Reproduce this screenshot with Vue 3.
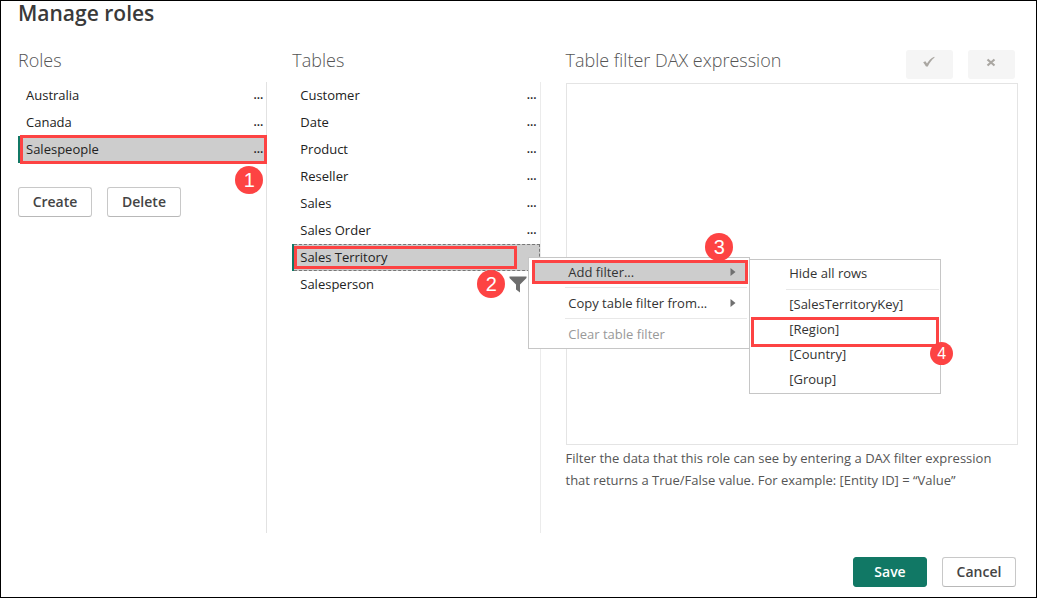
<script setup>
import { ref } from 'vue'

const roles = ['Australia', 'Canada', 'Salespeople']
const tables = [
  'Customer',
  'Date',
  'Product',
  'Reseller',
  'Sales',
  'Sales Order',
  'Sales Territory',
  'Salesperson',
]
const fields = ['[SalesTerritoryKey]', '[Region]', '[Country]', '[Group]']

const selectedRole = ref('Salespeople')
const selectedTable = ref('Sales Territory')
const expression = ref('')
</script>

<template>
  <main class="dialog">
    <h1 class="title">Manage roles</h1>

    <div class="columns">
      <section class="column">
        <h2 class="heading">Roles</h2>
        <div class="pane">
          <ul class="list">
            <li
              v-for="role in roles"
              :key="role"
              class="row"
              :class="{ selected: role === selectedRole }"
            >
              <button type="button" class="name" @click="selectedRole = role">{{ role }}</button>
              <button type="button" class="more">...</button>
              <template v-if="role === 'Salespeople'">
                <span class="mark mark-role"></span>
                <span class="badge badge-one">1</span>
              </template>
            </li>
          </ul>
          <div class="actions">
            <button type="button" class="btn">Create</button>
            <button type="button" class="btn">Delete</button>
          </div>
        </div>
      </section>

      <section class="column">
        <h2 class="heading">Tables</h2>
        <div class="pane pane-light">
          <ul class="list">
            <li
              v-for="table in tables"
              :key="table"
              class="row"
              :class="{ selected: table === selectedTable, focused: table === selectedTable }"
            >
              <button type="button" class="name" @click="selectedTable = table">{{ table }}</button>
              <svg
                v-if="table === 'Salesperson'"
                class="funnel"
                width="18"
                height="17"
                viewBox="0 0 18 17"
              >
                <path d="M0.5 0.5H17.5V2L11 8.5V16.5L7 13.5V8.5L0.5 2Z" fill="#6e6e6e" />
              </svg>
              <button v-else-if="table !== 'Sales Territory'" type="button" class="more">...</button>

              <template v-if="table === 'Sales Territory'">
                <span class="mark mark-table"></span>
                <span class="badge badge-two">2</span>
                <div class="menu context" role="menu">
                  <button type="button" class="item active" role="menuitem">
                    Add filter...
                    <svg class="arrow" width="6" height="8" viewBox="0 0 6 8">
                      <path d="M0.5 0L5.5 4L0.5 8Z" fill="#707070" />
                    </svg>
                    <span class="mark mark-item"></span>
                  </button>
                  <hr class="rule" />
                  <button type="button" class="item" role="menuitem">
                    Copy table filter from...
                    <svg class="arrow" width="6" height="8" viewBox="0 0 6 8">
                      <path d="M0.5 0L5.5 4L0.5 8Z" fill="#707070" />
                    </svg>
                  </button>
                  <hr class="rule" />
                  <button type="button" class="item" role="menuitem" disabled>
                    Clear table filter
                  </button>
                  <span class="badge badge-three">3</span>

                  <div class="menu submenu" role="menu">
                    <button type="button" class="item" role="menuitem">Hide all rows</button>
                    <hr class="rule" />
                    <button
                      v-for="field in fields"
                      :key="field"
                      type="button"
                      class="item"
                      role="menuitem"
                    >
                      {{ field }}
                      <template v-if="field === '[Region]'">
                        <span class="mark mark-field"></span>
                        <span class="badge badge-four">4</span>
                      </template>
                    </button>
                  </div>
                </div>
              </template>
            </li>
          </ul>
        </div>
      </section>

      <section class="column">
        <div class="editor-head">
          <h2 class="heading">
            <label for="expression">Table filter DAX expression</label>
          </h2>
          <div class="tools">
            <button type="button" class="tool" aria-label="Apply">
              <svg width="14" height="12" viewBox="0 0 14 12">
                <path
                  d="M1.2 6.2L3.4 5.2L5 7.6C6.8 4.6 9 2.2 12.2 0.8L12.6 1.5C9.8 3.8 7.6 6.8 5.8 10.4L4 10.6Z"
                  fill="#aaa7a2"
                />
              </svg>
            </button>
            <button type="button" class="tool" aria-label="Discard">
              <svg width="14" height="12" viewBox="0 0 14 12">
                <path d="M3.5 3.5L10.5 9.5M10.5 3.5L3.5 9.5" stroke="#aaa7a2" stroke-width="2.2" />
              </svg>
            </button>
          </div>
        </div>
        <textarea id="expression" v-model="expression" class="editor"></textarea>
        <p class="hint">
          Filter the data that this role can see by entering a DAX filter expression that returns a
          True/False value. For example: [Entity ID] = “Value”
        </p>
      </section>
    </div>

    <footer class="footer">
      <button type="button" class="btn primary">Save</button>
      <button type="button" class="btn">Cancel</button>
    </footer>
  </main>
</template>

<style>
body {
  margin: 0;
  background: #fff;
}
</style>

<style scoped>
.dialog,
.dialog * {
  box-sizing: border-box;
}
.dialog {
  display: flex;
  flex-direction: column;
  min-height: 100vh;
  padding: 0 18px 10px 17px;
  border: 1px solid #000;
  background: #fff;
  color: #222;
  font-family: 'Open Sans', 'Noto Sans', sans-serif;
  font-size: 13px;
}
button {
  margin: 0;
  padding: 0;
  border: 0;
  background: none;
  color: inherit;
  font: inherit;
  text-align: left;
}
.title {
  margin: 0 0 25px;
  color: #3a3a3a;
  font-size: 21px;
  font-weight: 600;
  line-height: 24px;
}
.columns {
  flex: 1;
  display: grid;
  grid-template-columns: 249fr 248fr 452fr;
  column-gap: 25px;
}
.column {
  display: flex;
  flex-direction: column;
  min-width: 0;
}
.heading {
  margin: 0;
  height: 32px;
  color: #555;
  font-size: 18px;
  font-weight: 300;
  line-height: 20px;
  white-space: nowrap;
}
.pane {
  flex: 1;
  border-right: 1px solid #e2e2e2;
}
.pane-light {
  border-right-color: #ebebeb;
}
.list {
  margin: 0;
  padding: 0;
  list-style: none;
}
.row {
  position: relative;
  display: flex;
  align-items: center;
  height: 27px;
  padding: 0 3px 1px 6px;
  border-left: 2px solid transparent;
}
.row.selected {
  border-left-color: #117865;
  background: #cdcdcd;
}
.row.focused::after {
  content: '';
  position: absolute;
  inset: 0;
  border: 1px dashed #777;
  border-left: 0;
  pointer-events: none;
}
.name {
  flex: 1;
  line-height: 26px;
}
.more {
  font-size: 12px;
  font-weight: 600;
  line-height: 26px;
}
.funnel {
  margin-right: 10px;
}
.actions {
  display: flex;
  gap: 15px;
  padding-top: 24px;
}
.btn {
  width: 74px;
  height: 30px;
  padding-bottom: 2px;
  border: 1px solid #c8c8c8;
  border-bottom-color: #b8b8b8;
  border-radius: 3px;
  background: #fff;
  color: #444;
  font-size: 14px;
  font-weight: 600;
  text-align: center;
}
.btn.primary {
  border-color: #117865;
  background: #117865;
  color: #fff;
}
.editor-head {
  display: flex;
  justify-content: space-between;
  height: 33px;
}
.tools {
  display: flex;
  gap: 15px;
  padding-right: 3px;
}
.tool {
  display: flex;
  justify-content: center;
  width: 47px;
  height: 29px;
  padding-top: 6px;
  border-radius: 3px;
  background: #f5f5f5;
}
.editor {
  display: block;
  flex: 1;
  width: 100%;
  border: 1px solid #e4e4e4;
  background: #fff;
  resize: none;
  outline: none;
}
.hint {
  margin: 2px 0 42px;
  padding-right: 24px;
  color: #555;
  line-height: 22px;
}
.footer {
  display: flex;
  justify-content: flex-end;
  gap: 15px;
  padding: 24px 2px 0 0;
}
.menu {
  position: absolute;
  z-index: 2;
  border: 1px solid #c6c6c6;
  background: #fff;
  color: #333;
}
.context {
  left: 234px;
  top: 13px;
  width: 222px;
  padding: 2px 1px 2px 3px;
}
.submenu {
  left: 220px;
  top: 1px;
  width: 192px;
  padding: 1px 0;
}
.item {
  position: relative;
  display: flex;
  align-items: center;
  justify-content: space-between;
  width: 100%;
  height: 24px;
  padding: 0 12px 1px 36px;
  line-height: 22px;
}
.item.active {
  background: #cdcdcd;
}
.item:disabled {
  color: #999;
}
.submenu .item {
  height: 25px;
  padding-left: 39px;
}
.rule {
  height: 1px;
  margin: 3px 1px 3px 33px;
  border: 0;
  background: #e8e8e8;
}
.submenu .rule {
  margin: 3px 1px 2px 36px;
}
.mark {
  position: absolute;
  border: 3px solid #fd4343;
  pointer-events: none;
}
.mark-role {
  inset: -1px -1px -1px 0;
}
.mark-table {
  z-index: 1;
  inset: 2px 23px 2px 0;
}
.mark-item {
  inset: 0;
}
.mark-field {
  inset: 0 1px -5px 1px;
}
.badge {
  position: absolute;
  z-index: 3;
  width: 28px;
  height: 28px;
  border-radius: 50%;
  background: #fd4343;
  color: #fff;
  font-family: 'Liberation Sans', Arial, sans-serif;
  font-size: 20px;
  line-height: 28px;
  text-align: center;
}
.badge-one {
  top: 30px;
  right: 3px;
}
.badge-two {
  top: 26px;
  left: 183px;
}
.badge-three {
  top: -25px;
  left: 176px;
}
.badge-four {
  top: 25px;
  left: 180px;
  width: 23px;
  height: 23px;
  font-size: 16px;
  line-height: 23px;
}
</style>
